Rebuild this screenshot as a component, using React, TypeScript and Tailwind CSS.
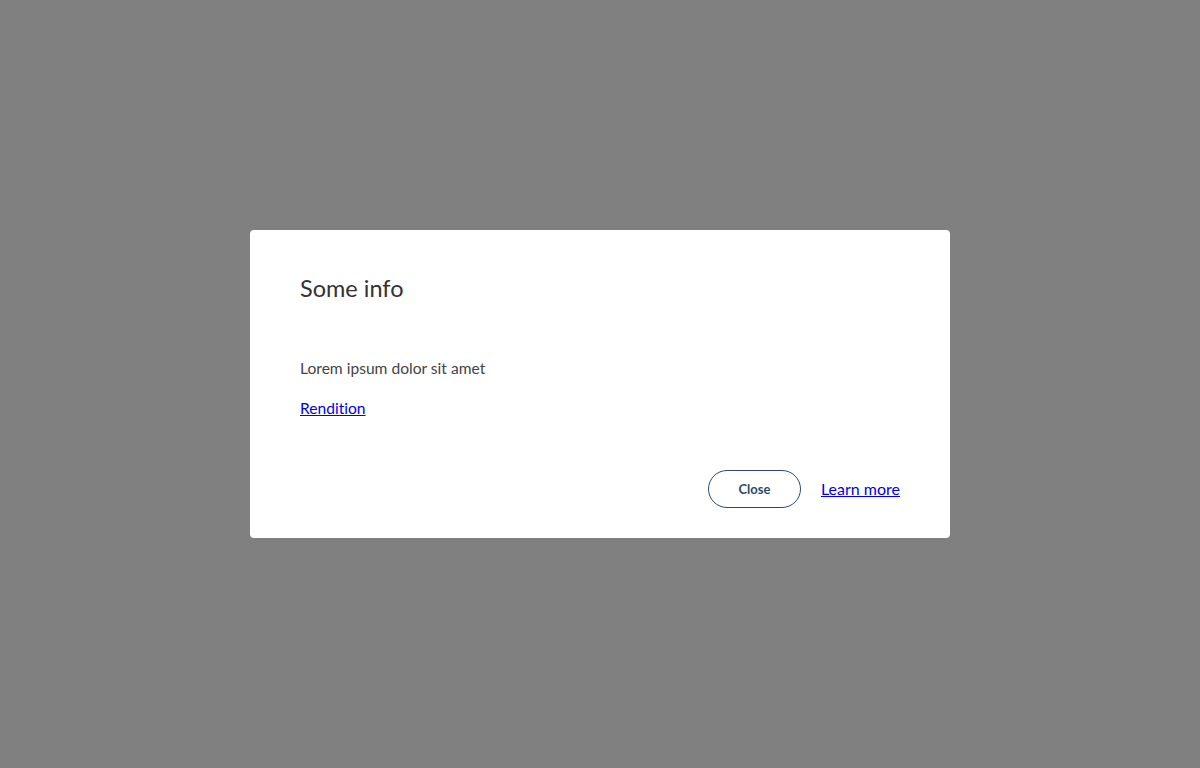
export default function App() {
  return (
    <div className="flex h-[768px] w-full items-center justify-center bg-[#808080] font-['Lato','Noto_Sans',sans-serif] [font-variant-ligatures:none]">
      <div className="w-[700px] rounded-[4px] bg-white px-[50px] pt-[40px] pb-[30px]">
        <h2 className="text-[23.5px] leading-[36px] text-[#333333]">Some info</h2>
        <p className="mt-[50px] text-[15.6px] leading-[24px] text-[#444444]">
          Lorem ipsum dolor sit amet
        </p>
        <a href="#" className="mt-[16px] block w-fit text-[15.6px] leading-[24px] text-[#0000ee] underline">
          Rendition
        </a>
        <div className="mt-[50px] flex items-center justify-end gap-[20px]">
          <button
            type="button"
            className="h-[38px] w-[93px] rounded-full border border-[#2c4a6b] pt-[2px] text-[13px] font-bold text-[#2c4a6b]"
          >
            Close
          </button>
          <a href="#" className="text-[16px] leading-[24px] text-[#0000ee] underline">
            Learn more
          </a>
        </div>
      </div>
    </div>
  );
}
